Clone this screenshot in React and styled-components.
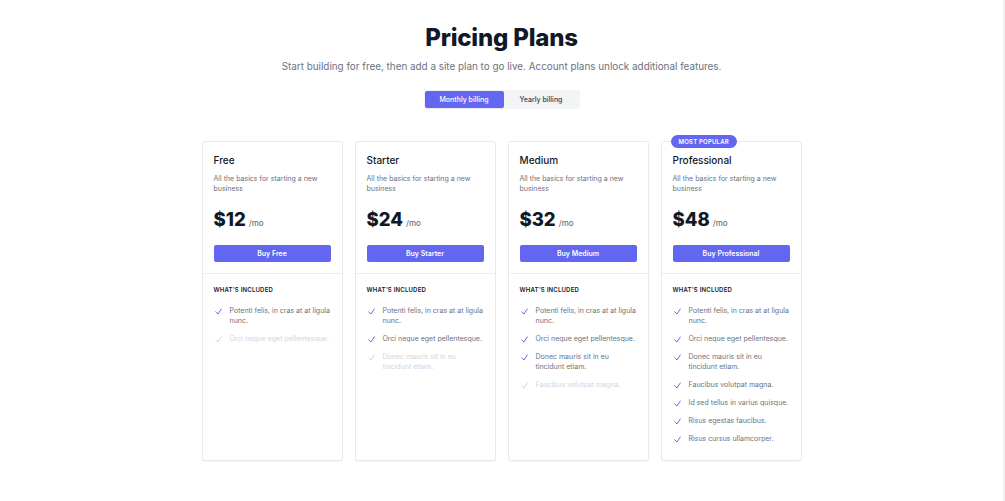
import React from 'react';
import styled, { createGlobalStyle } from 'styled-components';

const GlobalStyle = createGlobalStyle`
  * { box-sizing: border-box; }
  body {
    margin: 0;
    background: #ffffff;
    font-family: Inter, "Noto Sans", Arial, sans-serif;
    -webkit-font-smoothing: antialiased;
  }
`;

const plans = [
  {
    name: 'Free',
    price: 12,
    features: [
      { text: 'Potenti felis, in cras at at ligula nunc.', on: true },
      { text: 'Orci neque eget pellentesque.', on: false },
    ],
  },
  {
    name: 'Starter',
    price: 24,
    features: [
      { text: 'Potenti felis, in cras at at ligula nunc.', on: true },
      { text: 'Orci neque eget pellentesque.', on: true },
      { text: 'Donec mauris sit in eu tincidunt etiam.', on: false },
    ],
  },
  {
    name: 'Medium',
    price: 32,
    features: [
      { text: 'Potenti felis, in cras at at ligula nunc.', on: true },
      { text: 'Orci neque eget pellentesque.', on: true },
      { text: 'Donec mauris sit in eu tincidunt etiam.', on: true },
      { text: 'Faucibus volutpat magna.', on: false },
    ],
  },
  {
    name: 'Professional',
    price: 48,
    popular: true,
    features: [
      { text: 'Potenti felis, in cras at at ligula nunc.', on: true },
      { text: 'Orci neque eget pellentesque.', on: true },
      { text: 'Donec mauris sit in eu tincidunt etiam.', on: true },
      { text: 'Faucibus volutpat magna.', on: true },
      { text: 'Id sed tellus in varius quisque.', on: true },
      { text: 'Risus egestas faucibus.', on: true },
      { text: 'Risus cursus ullamcorper.', on: true },
    ],
  },
];

function Check({ on }) {
  return (
    <CheckIcon viewBox="0 0 24 24" fill="none" stroke={on ? '#6366f1' : '#d1d5db'} strokeWidth="2.6" strokeLinecap="round" strokeLinejoin="round">
      <path d="M4.5 12.75l6 6 9-13.5" />
    </CheckIcon>
  );
}

function PlanCard({ plan }) {
  return (
    <Card>
      {plan.popular && <Badge>Most popular</Badge>}
      <CardTop>
        <PlanName>{plan.name}</PlanName>
        <PlanDesc>All the basics for starting a new business</PlanDesc>
        <Price>
          <Amount>${plan.price}</Amount>
          <Per>/mo</Per>
        </Price>
        <BuyButton>Buy {plan.name}</BuyButton>
      </CardTop>
      <Features>
        <FeaturesTitle>What's included</FeaturesTitle>
        <FeatureList>
          {plan.features.map((f) => (
            <Feature key={f.text} $on={f.on}>
              <Check on={f.on} />
              <span>{f.text}</span>
            </Feature>
          ))}
        </FeatureList>
      </Features>
    </Card>
  );
}

export default function App() {
  return (
    <Page>
      <GlobalStyle />
      <Header>
        <Title>Pricing Plans</Title>
        <Subtitle>
          Start building for free, then add a site plan to go live. Account plans unlock additional features.
        </Subtitle>
        <Toggle>
          <ToggleButton $active>Monthly billing</ToggleButton>
          <ToggleButton>Yearly billing</ToggleButton>
        </Toggle>
      </Header>
      <Grid>
        {plans.map((p) => (
          <PlanCard key={p.name} plan={p} />
        ))}
      </Grid>
    </Page>
  );
}

const Page = styled.div`
  min-height: 100vh;
  padding-top: 24px;
  border-right: 2px solid #f1f1f2;
`;

const Header = styled.div`
  display: flex;
  flex-direction: column;
  align-items: center;
`;

const Title = styled.h1`
  margin: 0;
  font-size: 24px;
  line-height: 28px;
  font-weight: 800;
  color: #111827;
  letter-spacing: -0.2px;
`;

const Subtitle = styled.p`
  margin: 7px 0 0;
  font-size: 9.9px;
  line-height: 14px;
  color: #6b7280;
`;

const Toggle = styled.div`
  margin-top: 17px;
  display: flex;
  padding: 1px;
  background: #f3f4f6;
  border-radius: 3px;
`;

const ToggleButton = styled.button`
  border: 0;
  height: 17px;
  width: ${(p) => (p.$active ? '79px' : '75px')};
  border-radius: 2px;
  font-family: inherit;
  font-size: 7px;
  font-weight: 500;
  color: ${(p) => (p.$active ? '#ffffff' : '#374151')};
  background: ${(p) => (p.$active ? '#6366f1' : 'transparent')};
  box-shadow: ${(p) => (p.$active ? '0 1px 1px rgba(0,0,0,0.05)' : 'none')};
  padding: 0;
`;

const Grid = styled.div`
  width: 600px;
  margin: 32px auto 0;
  display: grid;
  grid-template-columns: repeat(4, 1fr);
  gap: 12px;
`;

const Card = styled.div`
  position: relative;
  border: 1px solid #e8e9ec;
  border-radius: 3px;
  background: #ffffff;
  box-shadow: 0 1px 1px rgba(0, 0, 0, 0.04);
`;

const Badge = styled.div`
  position: absolute;
  top: -7px;
  left: 9px;
  height: 13px;
  padding: 0 8px;
  display: flex;
  align-items: center;
  border-radius: 7px;
  background: #6366f1;
  color: #ffffff;
  font-size: 6px;
  font-weight: 600;
  letter-spacing: 0.2px;
  text-transform: uppercase;
`;

const CardTop = styled.div`
  padding: 12px 11px 11px;
  border-bottom: 1px solid #eceef1;
`;

const PlanName = styled.h2`
  margin: 0;
  font-size: 10px;
  line-height: 12px;
  font-weight: 500;
  color: #111827;
`;

const PlanDesc = styled.p`
  margin: 8px 0 0;
  font-size: 7px;
  line-height: 10px;
  color: #6b7280;
  padding-right: 4px;
`;

const Price = styled.p`
  margin: 16px 0 0;
  display: flex;
  align-items: baseline;
  gap: 3px;
`;

const Amount = styled.span`
  font-size: 18.5px;
  line-height: 19px;
  font-weight: 800;
  color: #111827;
`;

const Per = styled.span`
  font-size: 8px;
  font-weight: 500;
  color: #6b7280;
`;

const BuyButton = styled.button`
  margin-top: 16px;
  display: block;
  width: 100%;
  height: 17px;
  border: 0;
  border-radius: 2px;
  background: #6366f1;
  color: #ffffff;
  font-family: inherit;
  font-size: 7px;
  font-weight: 600;
  padding: 0;
`;

const Features = styled.div`
  padding: 12px 11px 16px;
`;

const FeaturesTitle = styled.h3`
  margin: 0;
  font-size: 6px;
  line-height: 8px;
  font-weight: 600;
  color: #111827;
  letter-spacing: 0.2px;
  text-transform: uppercase;
`;

const FeatureList = styled.ul`
  list-style: none;
  margin: 12px 0 0;
  padding: 0;
  display: flex;
  flex-direction: column;
  gap: 8px;
`;

const Feature = styled.li`
  display: flex;
  gap: 7px;
  font-size: 7px;
  line-height: 10px;
  color: ${(p) => (p.$on ? '#6b7280' : '#d1d5db')};
`;

const CheckIcon = styled.svg`
  flex: none;
  width: 9px;
  height: 9px;
  margin-top: 0.5px;
`;
